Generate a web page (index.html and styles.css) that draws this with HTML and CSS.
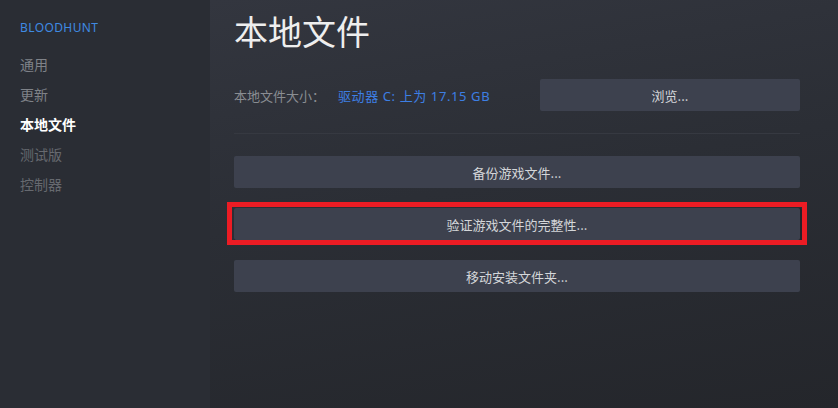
FILE: index.html
```html
<!DOCTYPE html>
<html lang="zh-CN">
<head>
<meta charset="utf-8">
<title>本地文件</title>
<link rel="stylesheet" href="styles.css">
</head>
<body>
<div class="app">
  <aside class="sidebar">
    <div class="game">BLOODHUNT</div>
    <nav class="nav">
      <div class="nav-item">通用</div>
      <div class="nav-item">更新</div>
      <div class="nav-item active">本地文件</div>
      <div class="nav-item dim">测试版</div>
      <div class="nav-item dim">控制器</div>
    </nav>
  </aside>
  <main class="main">
    <h1 class="title">本地文件</h1>
    <div class="size-row">
      <div class="size-info">
        <span class="label">本地文件大小：</span>
        <span class="value">驱动器 C: 上为 17.15 GB</span>
      </div>
      <button class="btn browse">浏览...</button>
    </div>
    <div class="divider"></div>
    <div class="actions">
      <button class="btn">备份游戏文件...</button>
      <button class="btn highlight">验证游戏文件的完整性...</button>
      <button class="btn">移动安装文件夹...</button>
    </div>
  </main>
</div>
</body>
</html>
```

FILE: styles.css
```css
* { box-sizing: border-box; }
html, body {
  margin: 0;
  padding: 0;
  width: 838px;
  height: 408px;
  overflow: hidden;
  background: #2a2d34;
  font-family: "Noto Sans", "Noto Sans CJK SC", sans-serif;
}
.app {
  display: flex;
  width: 838px;
  height: 408px;
}
.sidebar {
  width: 210px;
  flex: none;
  background: #2a2d34;
  padding: 18px 0 0 20px;
}
.game {
  font-size: 12px;
  line-height: 20px;
  color: #3f8ae2;
  letter-spacing: 0.4px;
}
.nav {
  margin-top: 12px;
  display: flex;
  flex-direction: column;
}
.nav-item {
  font-size: 14px;
  line-height: 30px;
  height: 30px;
  color: #7f8288;
}
.nav-item.active {
  color: #ffffff;
  font-weight: 700;
}
.nav-item.dim {
  color: #66696f;
}
.main {
  flex: 1;
  background: linear-gradient(170deg, #33363f 0%, #2b2e35 45%, #24262b 100%);
  padding: 12px 38px 0 24px;
  display: flex;
  flex-direction: column;
}
.title {
  margin: 0;
  font-size: 34px;
  line-height: 40px;
  font-weight: 400;
  color: #eeeeee;
}
.size-row {
  margin-top: 27px;
  display: flex;
  align-items: center;
  justify-content: space-between;
  height: 32px;
}
.size-info {
  font-size: 13px;
  display: flex;
  gap: 13px;
}
.label { color: #8a8d92; }
.value { color: #3d7fe4; letter-spacing: 0.6px; }
.btn {
  display: block;
  position: relative;
  height: 32px;
  border: none;
  border-radius: 2px;
  background: #3d414e;
  color: #d4d6d9;
  font-family: "Noto Sans CJK SC", "Noto Sans", sans-serif;
  font-size: 13px;
  padding: 0;
  width: 100%;
  text-align: center;
}
.btn.browse {
  width: 260px;
}
.divider {
  margin-top: 22px;
  height: 1px;
  background: #363941;
}
.actions {
  margin-top: 22px;
  display: flex;
  flex-direction: column;
  gap: 20px;
}
.btn.highlight {
  box-shadow: 1px 1px 0 1px #22242a;
}
.btn.highlight::after {
  content: "";
  position: absolute;
  left: -7px;
  right: -7px;
  top: -6px;
  bottom: -5px;
  border: 5px solid #ec1c24;
  pointer-events: none;
}
```
